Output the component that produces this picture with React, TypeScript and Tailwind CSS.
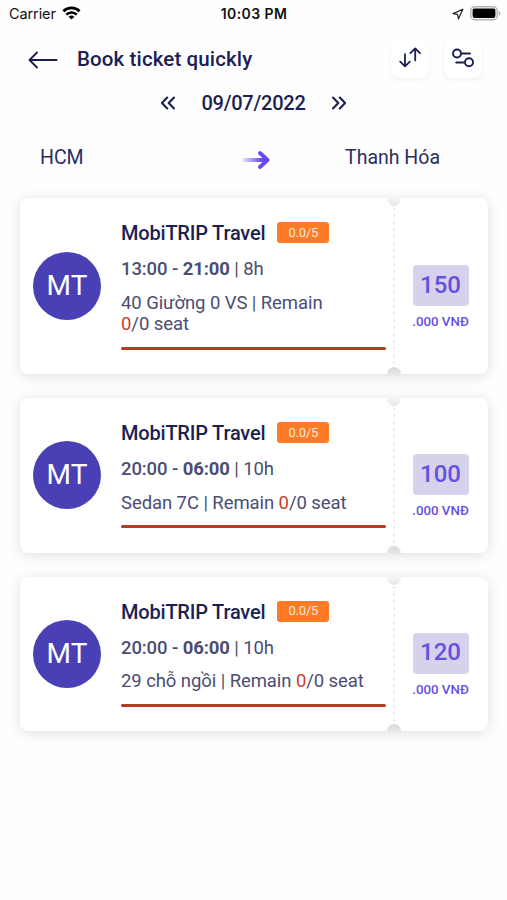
type Trip = {
  id: number;
  name: string;
  rating: string;
  start: string;
  end: string;
  duration: string;
  vehicle: string;
  price: string;
};

const trips: Trip[] = [
  { id: 1, name: 'MobiTRIP Travel', rating: '0.0/5', start: '13:00', end: '21:00', duration: '8h', vehicle: '40 Giường 0 VS', price: '150' },
  { id: 2, name: 'MobiTRIP Travel', rating: '0.0/5', start: '20:00', end: '06:00', duration: '10h', vehicle: 'Sedan 7C', price: '100' },
  { id: 3, name: 'MobiTRIP Travel', rating: '0.0/5', start: '20:00', end: '06:00', duration: '10h', vehicle: '29 chỗ ngồi', price: '120' },
];

function StatusBar() {
  return (
    <div className="grid h-[27px] grid-cols-3 items-center pr-[6px] pl-[9px] font-['Inter','Roboto',sans-serif] text-[#111]">
      <div className="flex items-center gap-[6px]">
        <span className="text-[14.5px] tracking-[-0.1px]">Carrier</span>
        <svg width="19" height="14" viewBox="0 0 19 14" className="-mt-[2px]" fill="none" stroke="#000" strokeWidth="2.6">
          <path d="M1.4 5.2a11.6 11.6 0 0 1 16.2 0" />
          <path d="M4.3 8.6a7.4 7.4 0 0 1 10.4 0" />
          <path d="M9.5 13.6 6.6 10.8a4.2 4.2 0 0 1 5.8 0z" fill="#000" stroke="none" />
        </svg>
      </div>
      <span className="pr-[2px] text-center text-[14px] font-semibold tracking-[0.4px] whitespace-nowrap">10:03 PM</span>
      <div className="flex items-center justify-end gap-[6px]">
        <svg width="12" height="12" viewBox="0 0 12 12" fill="none" stroke="#222" strokeWidth="1.2" strokeLinejoin="round">
          <path d="M10.8 1.2 1 5.6l4.6.8.8 4.6z" />
        </svg>
        <svg width="31" height="15" viewBox="0 0 31 15" className="-mt-px">
          <rect x="0.8" y="0.8" width="26.4" height="13" rx="4" fill="#fff" stroke="#b3b3b3" strokeWidth="1.4" />
          <rect x="2.6" y="2.6" width="22.8" height="9.4" rx="2" fill="#000" />
          <path d="M28.8 5v4.6c1-.4 1.6-1.2 1.6-2.3S29.8 5.4 28.8 5z" fill="#b3b3b3" />
        </svg>
      </div>
    </div>
  );
}

function Header() {
  return (
    <div className="flex h-[65px] items-center pr-[25px] pl-7">
      <svg width="30" height="18" viewBox="0 0 30 18" fill="none" stroke="#1c1f54" strokeWidth="1.9" strokeLinecap="round" strokeLinejoin="round">
        <path d="M28.6 9H1.5M9 1.5 1.5 9 9 16.5" />
      </svg>
      <h1 className="ml-[19px] flex-1 text-[20.5px] font-medium tracking-[0.12px] text-[#1c1f54]">Book ticket quickly</h1>
      <div className="flex gap-[15px] pb-px">
        <button className="flex size-[38px] items-center justify-center rounded-lg bg-white pr-px pb-[3px] shadow-[0_2px_5px_rgba(40,60,90,0.07)]">
          <svg width="22" height="21" viewBox="0 0 22 21" fill="none" stroke="#1c1f54" strokeWidth="1.8" strokeLinecap="round" strokeLinejoin="round">
            <path d="M6 7.2v12M1.2 14.6 6 19.4l4.8-4.8" />
            <path d="M16.2 13.4v-12M11.4 6.2l4.8-4.8L21 6.2" />
          </svg>
        </button>
        <button className="flex size-[38px] items-center justify-center rounded-lg bg-white pb-[3px] shadow-[0_2px_5px_rgba(40,60,90,0.07)]">
          <svg width="22" height="20" viewBox="0 0 22 20" fill="none" stroke="#1c1f54" strokeWidth="1.9" strokeLinecap="round">
            <circle cx="5" cy="5.5" r="4" />
            <path d="M9.5 5.5h8.500M4.2 14.5h8" />
            <circle cx="17" cy="14.3" r="4" />
          </svg>
        </button>
      </div>
    </div>
  );
}

function DatePicker() {
  return (
    <div className="flex h-[22px] items-center justify-center gap-[26px] text-[#1c1f54]">
      <svg width="14" height="14" viewBox="0 0 14 14" fill="none" stroke="currentColor" strokeWidth="2.1" strokeLinecap="round" strokeLinejoin="round">
        <path d="M6.2 1.5.9 7l5.3 5.5M13 1.500 7.700 7l5.300 5.500" />
      </svg>
      <span className="text-[20px] font-medium tracking-[-0.25px]">09/07/2022</span>
      <svg width="14" height="14" viewBox="0 0 14 14" fill="none" stroke="currentColor" strokeWidth="2.1" strokeLinecap="round" strokeLinejoin="round">
        <path d="M1 1.5 6.3 7 1 12.5M7.800 1.500 13.100 7l-5.300 5.500" />
      </svg>
    </div>
  );
}

function Route() {
  return (
    <div className="mt-[29px] grid h-7 grid-cols-[1fr_28px_1fr] items-center text-[19.5px] text-[#2b2d5e]">
      <span className="pl-10">HCM</span>
      <svg width="28" height="20" viewBox="0 0 28 20" fill="none" strokeLinecap="round" strokeLinejoin="round" className="mt-[5px] ml-[2px]">
        <defs>
          <linearGradient id="trail" x1="0" x2="28" y1="0" y2="0" gradientUnits="userSpaceOnUse">
            <stop offset="0" stopColor="#6948ee" stopOpacity="0.1" />
            <stop offset="0.7" stopColor="#6948ee" />
          </linearGradient>
        </defs>
        <path d="M2 10h23" stroke="url(#trail)" strokeWidth="4" />
        <path d="M18 3l7.5 7-7.5 7" stroke="#6948ee" strokeWidth="3.8" />
      </svg>
      <span className="pr-[67px] text-right">Thanh Hóa</span>
    </div>
  );
}

function TripCard({ trip }: { trip: Trip }) {
  return (
    <div className="relative flex items-stretch rounded-lg bg-white shadow-[0_2px_14px_rgba(0,0,0,0.13)]">
      <div className="flex w-[101px] shrink-0 items-center pl-[13px]">
        <div className="flex size-[68px] items-center justify-center rounded-full bg-[#4a40b5] text-[28px] text-white">MT</div>
      </div>

      <div className="w-[265px] shrink-0 pt-6 pb-[24.5px] text-[18.5px] leading-[21.5px] text-[#4b4d73]">
        <div className="flex h-6 items-center gap-3">
          <h2 className="text-[20px] font-medium tracking-[-0.2px] text-[#1c1f54]">{trip.name}</h2>
          <span className="-mt-[3px] flex h-[21px] w-[52px] items-center justify-center rounded-[3px] bg-[#ff7a24] text-[13px] tracking-[-0.2px] text-[#ffe9dc]">
            {trip.rating}
          </span>
        </div>
        <p className="mt-[13px] tracking-[-0.1px]">
          <span className="font-medium">{trip.start} - </span>
          <span className="font-bold">{trip.end}</span> | {trip.duration}
        </p>
        <p className="mt-3 pr-5 tracking-[-0.08px]">
          {trip.vehicle} | Remain{' '}
          <span className="whitespace-nowrap">
            <span className="text-[#c9411f]">0</span>/0 seat
          </span>
        </p>
        <div className="mt-[11px] h-[3px] rounded-full bg-[#b83a20]" />
      </div>

      <div className="ml-[7px] w-[2px] bg-[radial-gradient(circle,#e4e4e4_1px,transparent_1.2px)] bg-[length:2px_7px]" />

      <div className="flex flex-1 flex-col items-center justify-center pt-[24px] pr-[2px]">
        <div className="flex h-[41px] w-14 items-center justify-center rounded-[4px] bg-[#d7d2ec] pb-[2px] text-[24px] font-medium text-[#6650e0]">{trip.price}</div>
        <span className="mt-[7px] h-[18px] text-[13.3px] leading-[18px] font-medium text-[#6650e0]">.000 VNĐ</span>
      </div>

      {/* ticket notches sit over the card edges */}
      <span className="absolute -top-px left-[367px] h-[9px] w-[14px] rounded-b-full bg-linear-to-b from-[#f6f6f6] to-[#e9e9e9]" />
      <span className="absolute -bottom-px left-[367px] h-[8px] w-[14px] rounded-t-full bg-linear-to-b from-[#d9d9d9] to-[#e8e8e8]" />
    </div>
  );
}

export default function App() {
  return (
    <div className="h-[900px] w-[507px] overflow-hidden bg-[#fefefe] font-['Roboto',sans-serif]">
      <StatusBar />
      <Header />
      <DatePicker />
      <Route />
      <div className="mt-[27px] flex flex-col gap-6 pr-[19px] pl-5">
        {trips.map((trip) => (
          <TripCard key={trip.id} trip={trip} />
        ))}
      </div>
    </div>
  );
}
